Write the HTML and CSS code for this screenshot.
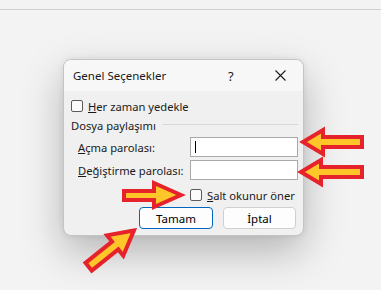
FILE: index.html
```
<!DOCTYPE html>
<html>
	<head>
		<meta charset="utf-8" />
		<title>Genel Seçenekler</title>
		<link rel="stylesheet" href="styles.css">
	</head>
	<body>
		<div class="topbar"></div>
		<div class="stage">
			<div class="dialog">
				<div class="titlebar">
					<span class="title">Genel Seçenekler</span>
					<span class="help">?</span>
					<span class="close">
						<svg width="11" height="11" viewBox="0 0 11 11">
							<path d="M0.5 0.5 L10.5 10.5 M10.5 0.5 L0.5 10.5" stroke="#1b1b1b" stroke-width="1.1" fill="none" />
						</svg>
					</span>
				</div>
				<div class="content">
					<label class="check row-backup">
						<span class="box"></span>
						<span><u>H</u>er zaman yedekle</span>
					</label>
					<div class="group">
						<span>Dosya paylaşımı</span>
						<span class="rule"></span>
					</div>
					<div class="field row-open">
						<span class="label"><u>A</u>çma parolası:</span>
						<span class="input"><span class="caret"></span></span>
					</div>
					<div class="field row-modify">
						<span class="label"><u>D</u>eğiştirme parolası:</span>
						<span class="input"></span>
					</div>
					<label class="check row-readonly">
						<span class="box"></span>
						<span><u>S</u>alt okunur öner</span>
					</label>
					<div class="buttons">
						<button class="btn btn-default">Tamam</button>
						<button class="btn">İptal</button>
					</div>
				</div>
			</div>
		</div>
		<!-- işaret okları -->
		<svg class="arrows" width="381" height="290" viewBox="0 0 381 290">
			<g fill="#ffc62a" stroke="#e6222a" stroke-width="4" stroke-linejoin="miter" stroke-miterlimit="10">
				<polygon points="303,142 323,130 323,137 362,137 362,147 323,147 323,154" />
				<polygon points="301,172 321,160 321,167 362,167 362,177 321,177 321,184" />
				<polygon points="181,195 154,183 154,191 124,191 124,200 154,200 154,207" />
				<polygon transform="translate(137,228) rotate(-38.7)" points="-4,0 -28,-13 -28,-5 -62,-5 -62,5 -28,5 -28,13" />
			</g>
		</svg>
	</body>
</html>
```

FILE: styles.css
```
*{margin: 0;padding: 0;box-sizing: border-box;}
body{background-color: #f3f3f3;
font-family: "Noto Sans", "Liberation Sans", sans-serif;
font-size: 11.2px;
color: #1a1a1a;
width: 381px;height: 290px;
overflow: hidden;
position: relative;
white-space: nowrap;
}
.topbar{height: 10px;
border-bottom: 1px solid #cfcfcf;
}
.stage{padding: 49px 0 0 63px;
}
.dialog{width: 241px;height: 177px;
background-color: #f0f0f0;
border: 1px solid #c4c4c4;
border-radius: 8px;
box-shadow: 0 16px 40px rgba(0,0,0,0.26), 0 0 6px rgba(0,0,0,0.08);
overflow: hidden;
}
.titlebar{height: 31px;
display: flex;
align-items: center;
padding-left: 9px;
background-color: #f7f7f7;
font-size: 11.5px;
}
.title{flex: 1;
}
.help{width: 12px;
margin-right: 35px;
font-size: 13px;
}
.close{width: 11px;height: 11px;
margin-right: 17px;
display: flex;
}
.content{padding: 0 5px 0 7px;
}
.check{display: flex;
align-items: center;
gap: 5px;
height: 14px;
}
.box{width: 12px;height: 12px;
flex-shrink: 0;
border: 1px solid #5c5c5c;
border-radius: 2px;
background-color: #fbfbfb;
}
.row-backup{margin-top: 8px;
}
.group{display: flex;
align-items: center;
gap: 6px;
height: 14px;
margin-top: 5px;
}
.rule{flex: 1;
height: 1px;
background-color: #d8d8d8;
margin-top: -2px;
}
.field{display: flex;
align-items: center;
padding-left: 7px;
height: 20px;
}
.row-open{margin-top: 5px;
}
.row-modify{margin-top: 3px;
}
.label{flex: 1;
}
.input{width: 108px;height: 20px;
flex-shrink: 0;
border: 1px solid #a9a9a9;
background-color: #ffffff;
padding: 3px 0 0 4px;
}
.caret{display: block;
width: 1px;height: 12px;
background-color: #000;
}
.row-readonly{margin-top: 8px;
padding-left: 119px;
}
.buttons{display: flex;
justify-content: flex-end;
gap: 10px;
margin-top: 5px;
padding-right: 2px;
}
.btn{width: 73px;height: 22px;
font-family: inherit;
font-size: 11.5px;
color: #000;
background-color: #fdfdfd;
border: 1px solid #d0d0d0;
border-radius: 4px;
}
.btn-default{width: 74px;
border-color: #0067c0;
}
.arrows{position: absolute;
top: 0;left: 0;
pointer-events: none;
}
```
